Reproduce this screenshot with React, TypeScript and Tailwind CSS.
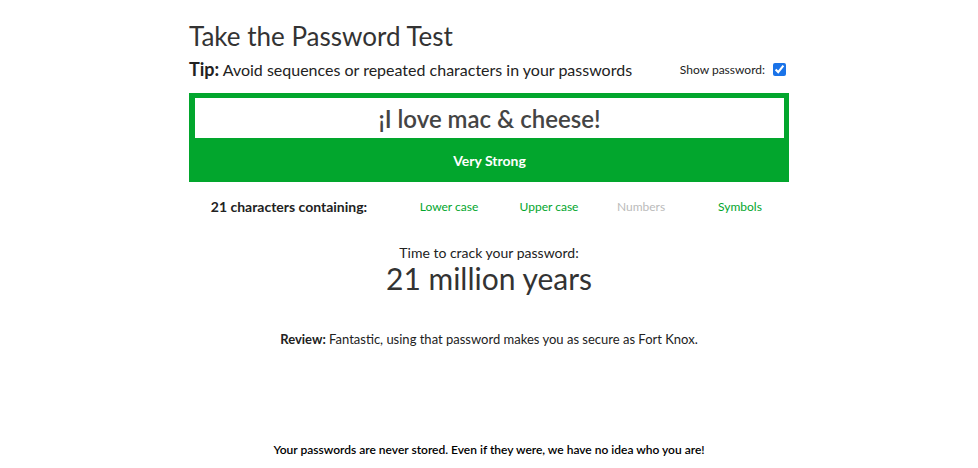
import { useState } from "react";

const checks = [
  { label: "Lower case", on: true, pad: "pl-[20px]" },
  { label: "Upper case", on: true, pad: "pl-[20px]" },
  { label: "Numbers", on: false, pad: "pl-[4px]" },
  { label: "Symbols", on: true, pad: "pl-[2px]" },
];

export default function App() {
  const [show, setShow] = useState(true);
  const [pw, setPw] = useState("¡I love mac & cheese!");

  return (
    <div className="min-h-[468px] bg-white text-[#222] font-['Lato','Liberation_Sans',sans-serif]">
      <div className="w-[600px] mx-auto pt-[20px]">
        <h1 className="text-[26px] leading-[32px] text-[#333]">Take the Password Test</h1>

        <div className="mt-[5px] flex items-center justify-between leading-[24px]">
          <p className="text-[16px]">
            <span className="text-[18px] font-bold">Tip:</span> Avoid sequences or repeated characters in your passwords
          </p>
          <label className="flex items-center gap-[8px] text-[12px] pr-[3px]">
            Show password:
            <input
              type="checkbox"
              checked={show}
              onChange={(e) => setShow(e.target.checked)}
              className="w-[13px] h-[13px] m-0 accent-[#1a73e8]"
            />
          </label>
        </div>

        {/* strength box */}
        <div className="mt-[11px] bg-[#02a62d] pt-[5px] pl-[6px] pr-[5px]">
          <input
            type={show ? "text" : "password"}
            value={pw}
            onChange={(e) => setPw(e.target.value)}
            className="w-full h-[40px] bg-white text-center text-[24px] font-semibold text-[#444] outline-none"
          />
          <div className="h-[44px] flex items-center justify-center text-white text-[14px] font-bold">
            Very Strong
          </div>
        </div>

        <div className="mt-[15px] grid grid-cols-[200px_100px_100px_100px_100px] leading-[20px]">
          <div className="text-center text-[14px] font-bold">21 characters containing:</div>
          {checks.map((c) => (
            <div
              key={c.label}
              className={`text-center text-[12px] ${c.pad} ${c.on ? "text-[#02a62d]" : "text-[#bbb]"}`}
            >
              {c.label}
            </div>
          ))}
        </div>

        <div className="mt-[28px] text-center">
          <div className="text-[14px] leading-[16px]">Time to crack your password:</div>
          <div className="mt-[2px] text-[30px] leading-[30px] text-[#333]">21 million years</div>
        </div>

        <p className="mt-[36px] text-center text-[13px] leading-[20px]">
          <span className="font-bold">Review:</span> Fantastic, using that password makes you as secure as Fort Knox.
        </p>

        <p className="mt-[93px] text-center text-[12px] font-semibold leading-[16px] text-black">
          Your passwords are never stored. Even if they were, we have no idea who you are!
        </p>
      </div>
    </div>
  );
}
